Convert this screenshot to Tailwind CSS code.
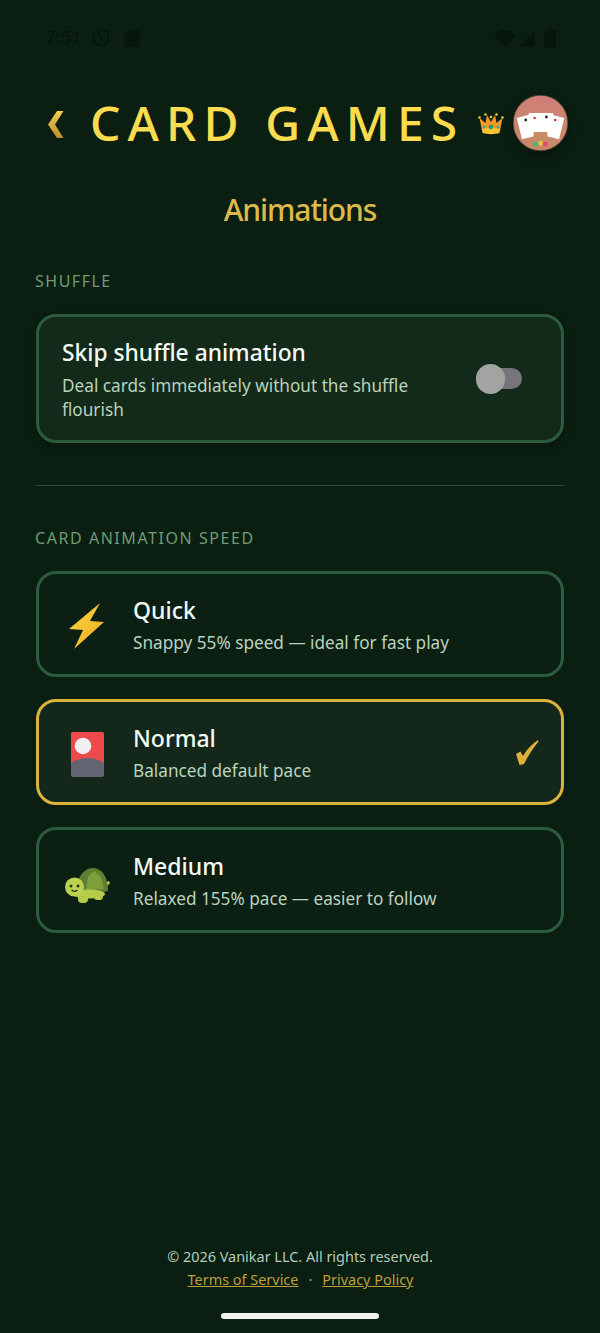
<!DOCTYPE html>
<html><head><meta charset="utf-8"><script src="https://cdn.jsdelivr.net/npm/@tailwindcss/browser@4"></script></head>
<body class="m-0">
<div class="relative w-[600px] h-[1333px] overflow-hidden bg-[#0a1e11] font-['Noto_Sans','Open_Sans',sans-serif] flex flex-col">
  <!-- status bar -->
  <div class="h-[76px] px-[45px] flex items-start justify-between pt-[27px] text-[#06160c] shrink-0">
    <div class="flex items-center h-[22px]">
      <span class="text-[19px] leading-[22px] font-['Roboto',sans-serif] w-[38px]">7:51</span>
      <svg class="ml-[9px]" width="18" height="20" viewBox="0 0 18 20" fill="none" stroke="currentColor" stroke-width="2"><path d="M9 2l7 2.500v5.500c0 4-3 7-7 8-4-1-7-4-7-8V4.500zM6 5l5 8"/></svg>
      <svg class="ml-[14px]" width="16" height="19" viewBox="0 0 16 19" fill="currentColor"><path d="M6 1h8a1.500 1.500 0 0 1 1.500 1.500v14a1.500 1.500 0 0 1-1.500 1.500H2a1.500 1.500 0 0 1-1.500-1.500V6z"/></svg>
    </div>
    <div class="flex items-center h-[22px] mr-[-1px]">
      <svg width="22" height="19" viewBox="0 0 22 19" fill="currentColor"><path d="M11 18L0.500 6.500C3 3 7 1 11 1s8 2 10.500 5.500z"/></svg>
      <svg class="ml-[3px]" width="16" height="17" viewBox="0 0 16 17" fill="currentColor"><path d="M16 0v17H0z"/></svg>
      <svg class="ml-[9px]" width="12" height="20" viewBox="0 0 12 20" fill="currentColor"><path d="M4 0h4v2h2a2 2 0 0 1 2 2v14a2 2 0 0 1-2 2H2a2 2 0 0 1-2-2V4a2 2 0 0 1 2-2h2z"/></svg>
    </div>
  </div>

  <!-- header -->
  <div class="h-[76px] mt-[9px] pl-[47px] pr-[33px] flex items-center shrink-0">
    <svg width="17" height="27" viewBox="0 0 17 27" class="shrink-0 mt-[3px]"><defs><linearGradient id="ch" x1="0" y1="0" x2="0" y2="1"><stop offset="0" stop-color="#f2cf4e"/><stop offset="1" stop-color="#b98f2e"/></linearGradient></defs><path d="M10 0h6.500L8 13.500 16.500 27H10L1 13.500z" fill="url(#ch)"/></svg>
    <span class="ml-[26px] text-[48px] leading-none font-medium tracking-[7.100px] text-[#fbdc50] whitespace-nowrap">CARD GAMES</span>
    <svg class="ml-auto shrink-0" width="26" height="26" viewBox="0 0 26 26">
      <path d="M4 21L1.500 8l6 5L9 5l4 7 4-7 1.500 8 6-5L22 21z" fill="#ef9a28"/>
      <path d="M4 19c5-1.500 13-1.500 18 0l-.5 4c-5 1.500-12 1.500-17 0z" fill="#f7c534"/>
      <circle cx="13" cy="17" r="2.300" fill="#1f9d6a"/><circle cx="6" cy="17" r="1.300" fill="#2aa6a0"/><circle cx="20" cy="17" r="1.300" fill="#2aa6a0"/>
      <circle cx="1.500" cy="7.500" r="1.300" fill="#f7c534"/><circle cx="7.500" cy="4.500" r="1.300" fill="#f7c534"/><circle cx="13" cy="7" r="1.300" fill="#f7c534"/><circle cx="18.500" cy="4.500" r="1.300" fill="#f7c534"/><circle cx="24.500" cy="7.500" r="1.300" fill="#f7c534"/>
    </svg>
    <div class="ml-[10px] w-[53px] h-[54px] rounded-full shrink-0 overflow-hidden shadow-[0_4px_12px_rgba(0,0,0,0.35)] ring-1 ring-[#c98a7a]/50 bg-[#c97a72]">
      <svg width="53" height="54" viewBox="0 0 54 54" preserveAspectRatio="none">
        <defs><linearGradient id="av" x1="0" y1="0" x2="0" y2="1"><stop offset="0" stop-color="#cf7f78"/><stop offset="1" stop-color="#c78a66"/></linearGradient></defs>
        <rect width="54" height="54" fill="url(#av)"/>
        <rect x="5" y="20" width="15" height="22" fill="#fff" transform="rotate(-14 12 30)"/>
        <rect x="34" y="20" width="15" height="22" fill="#fff" transform="rotate(14 42 30)"/>
        <rect x="15" y="17" width="13" height="22" fill="#fff"/><rect x="27" y="17" width="13" height="22" fill="#fff"/>
        <rect x="20" y="36" width="14" height="8" fill="#c98b60"/>
        <circle cx="12" cy="24" r="1.400" fill="#222"/><circle cx="21" cy="22" r="1.200" fill="#c22"/><circle cx="33" cy="21" r="1.400" fill="#222"/><circle cx="42" cy="24" r="1.200" fill="#c22"/>
        <circle cx="22" cy="48" r="2.500" fill="#3cb878"/><circle cx="27" cy="47" r="2.500" fill="#e6c83a"/><circle cx="32" cy="48" r="2.500" fill="#e8457e"/>
      </svg>
    </div>
  </div>

  <h1 class="mt-[29px] m-0 text-center text-[30px] leading-[40px] tracking-[-1.100px] font-medium text-[#dcb949]">Animations</h1>

  <div class="px-[36px] mt-[41px] flex flex-col">
    <div class="text-[16px] leading-[20px] tracking-[1.500px] text-[#6f9c78] -ml-px">SHUFFLE</div>
    <div class="mt-[23px] h-[129px] rounded-[20px] border-[3px] border-[#2c5b3d] bg-[#132a1a] pl-[23px] pr-[39px] flex items-center shadow-[0_4px_10px_rgba(0,0,0,0.2)]">
      <div class="w-[390px] mt-[2px]">
        <div class="text-[22.800px] leading-[32px] font-medium text-[#f4fbf5]">Skip shuffle animation</div>
        <div class="mt-[5px] text-[17.200px] leading-[24px] text-[#b9d3bc]">Deal cards immediately without the shuffle flourish</div>
      </div>
      <div class="relative ml-auto w-[46px] h-[30px] shrink-0">
        <div class="absolute left-[4px] right-0 top-[4px] h-[21px] rounded-full bg-[#77757c]"></div>
        <div class="absolute left-0 top-0 w-[29px] h-[30px] rounded-full bg-[#a3a4a1]"></div>
      </div>
    </div>
    <div class="mt-[42px] h-[1px] bg-[#2d4f38] -mx-px"></div>

    <div class="mt-[42px] text-[16px] leading-[20px] tracking-[1.550px] text-[#6f9c78] -ml-px">CARD ANIMATION SPEED</div>

    <div class="mt-[23px] flex flex-col gap-[22px]">
      <div class="h-[106px] rounded-[20px] border-[3px] border-[#2c5b3d] bg-[#0c1f13] pl-[26px] flex items-center">
        <svg class="shrink-0" width="46" height="50" viewBox="0 0 46 50"><defs><linearGradient id="bo" x1="0" y1="0" x2="1" y2="1"><stop offset="0" stop-color="#fcd844"/><stop offset="1" stop-color="#efa91f"/></linearGradient></defs><path d="M35 4L4 30l14 1-9 19 30-27-14-1z" fill="url(#bo)"/></svg>
        <div class="ml-[22px] mt-[2px]">
          <div class="text-[23px] leading-[32px] font-medium text-[#eefaf0]">Quick</div>
          <div class="mt-[4px] text-[17.200px] leading-[26px] text-[#b9d3bc]">Snappy 55% speed — ideal for fast play</div>
        </div>
      </div>
      <div class="relative h-[106px] rounded-[20px] border-[3px] border-[#dcb23f] bg-[#13281a] pl-[26px] flex items-center">
        <svg class="shrink-0" width="46" height="50" viewBox="0 0 46 50"><rect x="6" y="5" width="33" height="45" rx="2" fill="#626471"/><path d="M6 7a2 2 0 0 1 2-2h29a2 2 0 0 1 2 2v29c-4-3-10-5-16-5s-13 2-17 5z" fill="#ee4a4e"/><circle cx="18" cy="19" r="8.300" fill="#f2eff0"/></svg>
        <div class="ml-[22px] mt-[2px]">
          <div class="text-[23px] leading-[32px] font-medium text-[#f4fbf5]">Normal</div>
          <div class="mt-[4px] text-[17.200px] leading-[26px] text-[#b9d3bc]">Balanced default pace</div>
        </div>
        <svg class="ml-auto mr-[21px]" width="26" height="26" viewBox="0 0 26 26"><path d="M2 15l4.500-2.500L9 17C13 10 18 5 24 1l.5 1.500C19 9 14 17 10 25l-4.500 1z" fill="#dfb03c"/></svg>
      </div>
      <div class="h-[106px] rounded-[20px] border-[3px] border-[#2c5b3d] bg-[#0c1f13] pl-[26px] flex items-center">
        <svg class="shrink-0" width="46" height="50" viewBox="0 0 46 50">
          <path d="M37 37l8-9-1-2-7 3z" fill="#b4cc4a"/>
          <path d="M11 38c0-14 7-25 17-25 9 0 15 9 15 23l-10 2z" fill="#5f8030"/>
          <path d="M21 35l2-13 6-6 7 6 3 12z" fill="#7f9f3d"/>
          <ellipse cx="24" cy="39" rx="16" ry="4.500" fill="#b4cc4a"/>
          <rect x="13" y="38" width="10" height="10" rx="4" fill="#b4cc4a"/><rect x="29" y="38" width="9" height="7" rx="3.500" fill="#b4cc4a"/>
          <circle cx="9.500" cy="32" r="9.500" fill="#bcd24e"/>
          <circle cx="6" cy="31" r="1.500" fill="#263313"/><circle cx="13" cy="31" r="1.500" fill="#263313"/>
          <path d="M6.500 35c1.700 1.700 4.300 1.700 6 0" stroke="#263313" stroke-width="1.300" fill="none"/>
        </svg>
        <div class="ml-[22px] mt-[2px]">
          <div class="text-[23px] leading-[32px] font-medium text-[#f4fbf5]">Medium</div>
          <div class="mt-[4px] text-[17.200px] leading-[26px] text-[#b9d3bc]">Relaxed 155% pace — easier to follow</div>
        </div>
      </div>
    </div>
  </div>

  <div class="absolute left-0 right-0 top-[1245px] text-center text-[14.450px] leading-[24px] text-[#b4cdb8]">
    <div>© 2026 Vanikar LLC. All rights reserved.</div>
    <div class="-mt-px flex justify-center gap-[10px] pl-[1px]"><a class="underline text-[#bd9f3e]">Terms of Service</a><span class="text-[#9db3a1]">·</span><a class="underline text-[#bd9f3e]">Privacy Policy</a></div>
  </div>
  <div class="absolute left-[221px] top-[1313px] w-[158px] h-[6px] rounded-full bg-[#eef3ee]"></div>
</div>
</body></html>
